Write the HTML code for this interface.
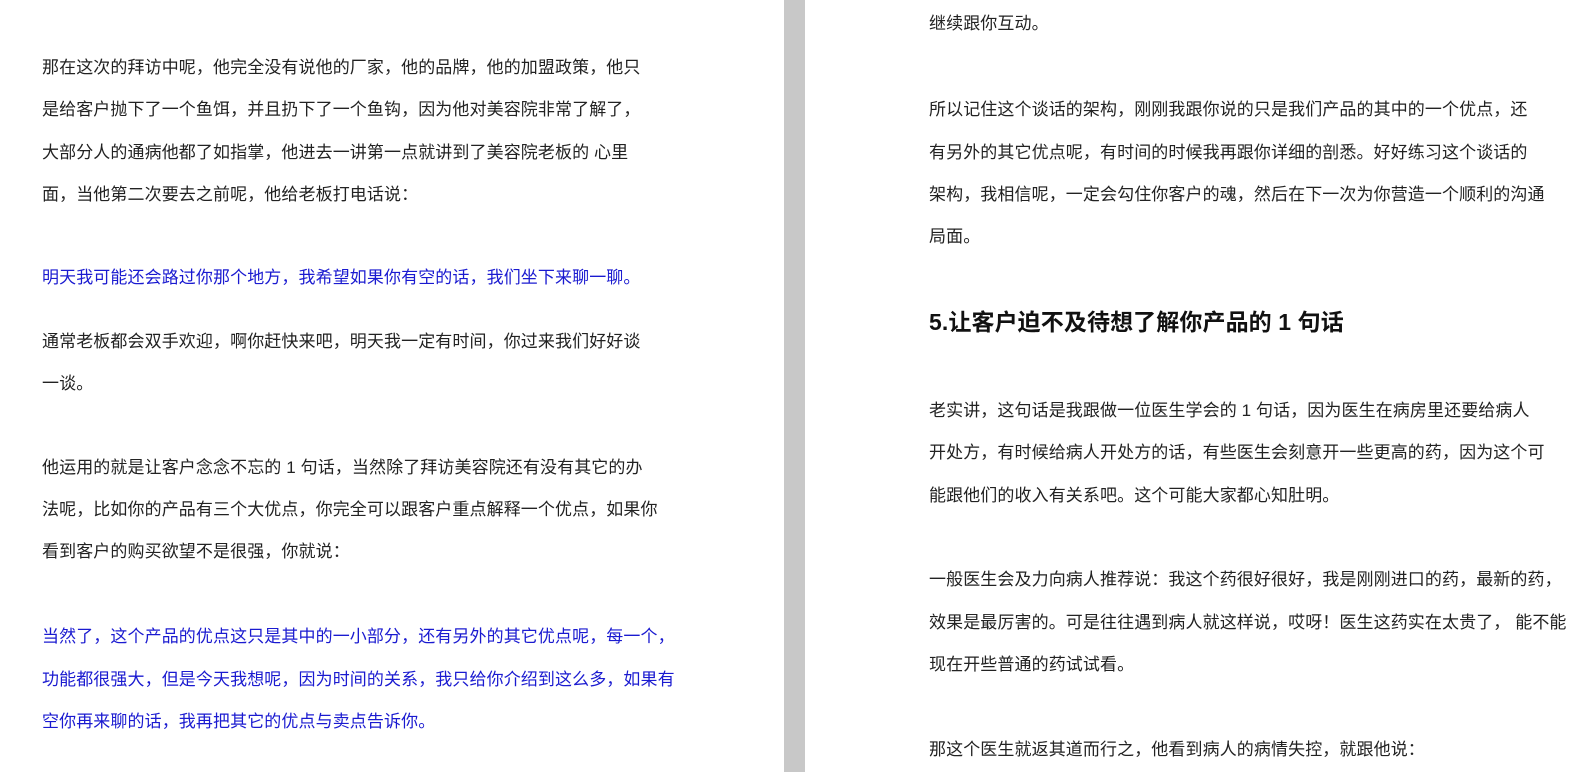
<!DOCTYPE html>
<html><head><meta charset="utf-8"><style>
body{margin:0;width:1579px;height:772px;overflow:hidden;background:#fff;position:relative;font-family:"Liberation Sans","Noto Sans CJK SC","WenQuanYi Zen Hei",sans-serif;font-size:17px;color:#222}
.g{position:absolute;left:784px;top:0;width:21px;height:772px;background:#c8c8c8}
p{position:absolute;margin:0;line-height:24px;white-space:nowrap;letter-spacing:0.1px}
.b{color:#1a1ad0}
.h{font-weight:bold;font-size:23px;color:#111}
</style></head><body>
<div class="g"></div>
<p style="left:42px;top:56px">那在这次的拜访中呢，他完全没有说他的厂家，他的品牌，他的加盟政策，他只</p>
<p style="left:42px;top:98px">是给客户抛下了一个鱼饵，并且扔下了一个鱼钩，因为他对美容院非常了解了，</p>
<p style="left:42px;top:141px">大部分人的通病他都了如指掌，他进去一讲第一点就讲到了美容院老板的 心里</p>
<p style="left:42px;top:183px">面，当他第二次要去之前呢，他给老板打电话说：</p>
<p class="b" style="left:42px;top:266px">明天我可能还会路过你那个地方，我希望如果你有空的话，我们坐下来聊一聊。</p>
<p style="left:42px;top:330px">通常老板都会双手欢迎，啊你赶快来吧，明天我一定有时间，你过来我们好好谈</p>
<p style="left:42px;top:372px">一谈。</p>
<p style="left:42px;top:456px">他运用的就是让客户念念不忘的 1 句话，当然除了拜访美容院还有没有其它的办</p>
<p style="left:42px;top:498px">法呢，比如你的产品有三个大优点，你完全可以跟客户重点解释一个优点，如果你</p>
<p style="left:42px;top:540px">看到客户的购买欲望不是很强，你就说：</p>
<p class="b" style="left:42px;top:625px">当然了，这个产品的优点这只是其中的一小部分，还有另外的其它优点呢，每一个，</p>
<p class="b" style="left:42px;top:668px">功能都很强大，但是今天我想呢，因为时间的关系，我只给你介绍到这么多，如果有</p>
<p class="b" style="left:42px;top:710px">空你再来聊的话，我再把其它的优点与卖点告诉你。</p>

<p style="left:929px;top:12px">继续跟你互动。</p>
<p style="left:929px;top:98px">所以记住这个谈话的架构，刚刚我跟你说的只是我们产品的其中的一个优点，还</p>
<p style="left:929px;top:141px">有另外的其它优点呢，有时间的时候我再跟你详细的剖悉。好好练习这个谈话的</p>
<p style="left:929px;top:183px">架构，我相信呢，一定会勾住你客户的魂，然后在下一次为你营造一个顺利的沟通</p>
<p style="left:929px;top:225px">局面。</p>
<p class="h" style="left:929px;top:310px">5.让客户迫不及待想了解你产品的 1 句话</p>
<p style="left:929px;top:399px">老实讲，这句话是我跟做一位医生学会的 1 句话，因为医生在病房里还要给病人</p>
<p style="left:929px;top:441px">开处方，有时候给病人开处方的话，有些医生会刻意开一些更高的药，因为这个可</p>
<p style="left:929px;top:484px">能跟他们的收入有关系吧。这个可能大家都心知肚明。</p>
<p style="left:929px;top:568px">一般医生会及力向病人推荐说：我这个药很好很好，我是刚刚进口的药，最新的药，</p>
<p style="left:929px;top:611px">效果是最厉害的。可是往往遇到病人就这样说，哎呀！医生这药实在太贵了， 能不能</p>
<p style="left:929px;top:653px">现在开些普通的药试试看。</p>
<p style="left:929px;top:738px">那这个医生就返其道而行之，他看到病人的病情失控，就跟他说：</p>
</body></html>
